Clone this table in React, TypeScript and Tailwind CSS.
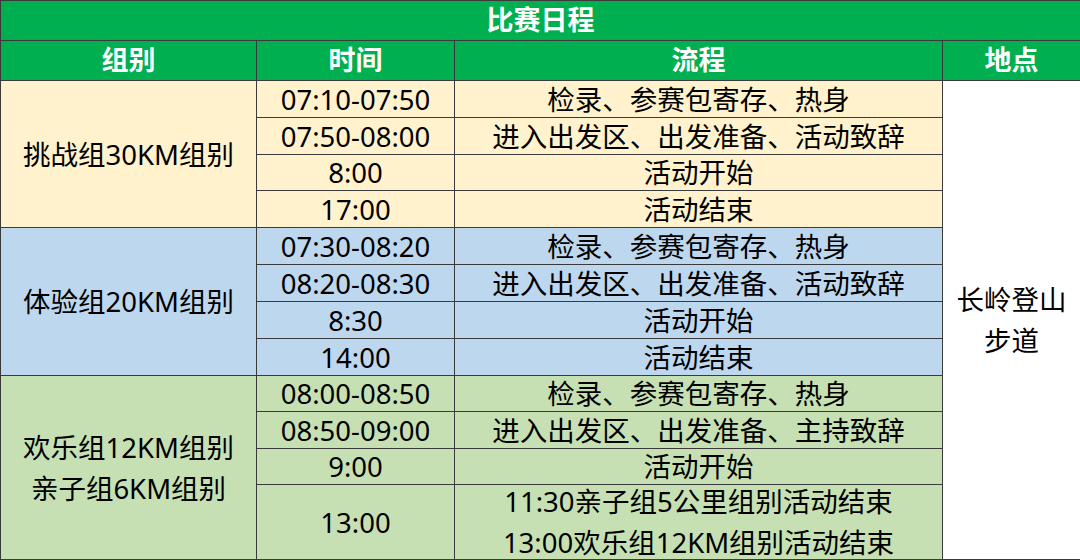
const font = { fontFamily: '"Noto Sans", "Noto Sans CJK SC", sans-serif' }

type Row = { time: string; flow: string[] }
type Group = { name: string[]; bg: string; rows: Row[] }

const groups: Group[] = [
  {
    name: ['挑战组30KM组别'],
    bg: 'bg-[#fff2cc]',
    rows: [
      { time: '07:10-07:50', flow: ['检录、参赛包寄存、热身'] },
      { time: '07:50-08:00', flow: ['进入出发区、出发准备、活动致辞'] },
      { time: '8:00', flow: ['活动开始'] },
      { time: '17:00', flow: ['活动结束'] },
    ],
  },
  {
    name: ['体验组20KM组别'],
    bg: 'bg-[#bdd7ee]',
    rows: [
      { time: '07:30-08:20', flow: ['检录、参赛包寄存、热身'] },
      { time: '08:20-08:30', flow: ['进入出发区、出发准备、活动致辞'] },
      { time: '8:30', flow: ['活动开始'] },
      { time: '14:00', flow: ['活动结束'] },
    ],
  },
  {
    name: ['欢乐组12KM组别', '亲子组6KM组别'],
    bg: 'bg-[#c6e0b4]',
    rows: [
      { time: '08:00-08:50', flow: ['检录、参赛包寄存、热身'] },
      { time: '08:50-09:00', flow: ['进入出发区、出发准备、主持致辞'] },
      { time: '9:00', flow: ['活动开始'] },
      { time: '13:00', flow: ['11:30亲子组5公里组别活动结束', '13:00欢乐组12KM组别活动结束'] },
    ],
  },
]

export default function App() {
  let rowIndex = 3
  return (
    <div className="w-[1080px] h-[560px] bg-white text-black" style={font}>
      <div className="grid h-full grid-cols-[255px_197px_487px_1fr] grid-rows-[39px_39px_36px_36px_35px_36px_36px_36px_36px_36px_35px_36px_35px_74px] gap-px bg-[#3a3a3a] p-px pr-0">
        <div className="col-span-4 flex items-center justify-center bg-[#00b050] text-[27px] font-bold text-white">比赛日程</div>
        {['组别', '时间', '流程', '地点'].map(h => (
          <div key={h} className="flex items-center justify-center bg-[#00b050] text-[27px] font-bold text-white">{h}</div>
        ))}
        {groups.map((g, gi) => {
          const start = rowIndex
          rowIndex += g.rows.length
          return [
            // group name spans its four rows
            <div key={`g${gi}`} className={`${g.bg} row-span-4 col-start-1 flex flex-col items-center justify-center text-[27.5px] leading-[41px]`} style={{ gridRowStart: start }}>
              {g.name.map(n => <span key={n}>{n}</span>)}
            </div>,
            ...g.rows.flatMap((r, ri) => [
              <div key={`t${gi}${ri}`} className={`${g.bg} col-start-2 flex items-center justify-center text-[27.5px] leading-[41px]`} style={{ gridRowStart: start + ri }}>{r.time}</div>,
              <div key={`f${gi}${ri}`} className={`${g.bg} col-start-3 flex flex-col items-center justify-center text-[27.5px] leading-[41px]`} style={{ gridRowStart: start + ri }}>
                {r.flow.map(f => <span key={f}>{f}</span>)}
              </div>,
            ]),
          ]
        })}
        <div className="col-start-4 row-start-3 row-span-12 flex flex-col items-center justify-center bg-white text-[27.5px] leading-[41px]">
          <span>长岭登山</span>
          <span>步道</span>
        </div>
      </div>
    </div>
  )
}
